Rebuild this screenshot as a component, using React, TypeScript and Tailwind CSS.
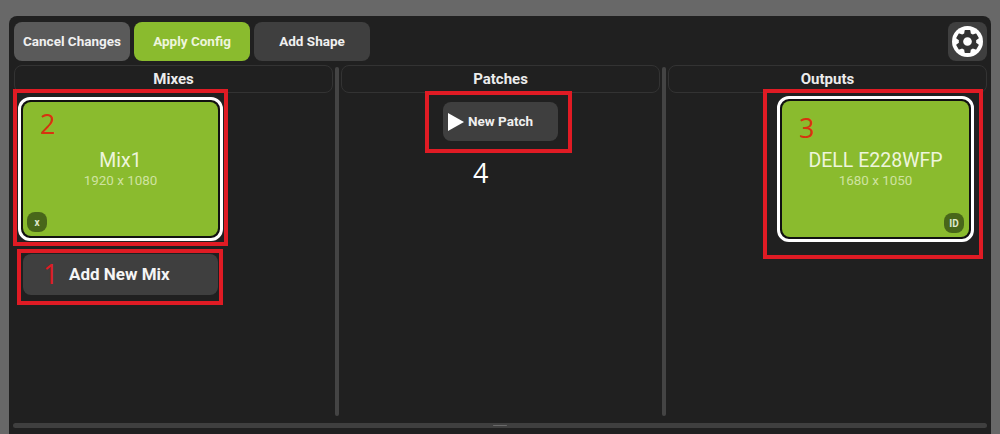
import { MdSettings } from "react-icons/md"

function ToolButton({ label, green }: { label: string; green?: boolean }) {
  return (
    <button
      className={
        green
          ? "h-[39px] w-[116px] rounded-[8px] bg-[#8abb2e] text-[13.5px] font-bold text-[#eef5dc]"
          : label === "Cancel Changes"
            ? "h-[39px] w-[116px] rounded-[8px] bg-[#5a5a5a] text-[13.5px] font-bold text-[#f0f0f0]"
            : "h-[39px] w-[116px] rounded-[8px] bg-[#3f3f3f] text-[13.5px] font-bold text-[#f0f0f0]"
      }
    >
      {label}
    </button>
  )
}

function ColumnHeader({ title }: { title: string }) {
  return (
    <div className="flex h-[28px] items-center justify-center rounded-[8px] border border-[#333333] pt-[1px] text-[15px] font-bold text-[#ececec]">
      {title}
    </div>
  )
}

function Divider() {
  return <div className="mt-[2px] h-[349px] w-[4px] shrink-0 rounded-full bg-[#444444]" />
}

function RedBox({ className }: { className: string }) {
  return <div className={"pointer-events-none absolute border-[4px] border-[#e01b24] " + className} />
}

function Card({
  name,
  size,
  badge,
  badgeRight,
  children,
}: {
  name: string
  size: string
  badge: string
  badgeRight?: boolean
  children: React.ReactNode
}) {
  return (
    <div className="h-full w-full rounded-[12px] border-[3px] border-white bg-[#111111] p-[2px]">
      <div className="relative flex h-full w-full flex-col items-center justify-center rounded-[8px] bg-[#8abb2e]">
        <span className="text-[19.5px] leading-[24px] text-[#eef5dc]">{name}</span>
        <span className="text-[13.4px] leading-[16px] text-[#cfe3a0]">{size}</span>
        {children}
        <span
          className={
            badgeRight
              ? "absolute bottom-[4px] right-[5px] flex h-[20px] w-[20px] items-center justify-center rounded-[8px] bg-[#48661a] text-[10px] font-bold text-[#dfe8cc]"
              : "absolute bottom-[4px] left-[4px] flex h-[20px] w-[20px] items-center justify-center rounded-[8px] bg-[#48661a] text-[10px] font-bold text-[#dfe8cc]"
          }
        >
          {badge}
        </span>
      </div>
    </div>
  )
}

export default function App() {
  return (
    <div className="h-[434px] w-[1000px] overflow-hidden bg-[#686868] px-[9px] pt-[16px] font-['Roboto',sans-serif]">
      <div className="flex h-[418px] flex-col rounded-t-[8px] bg-[#202020] pl-[5px] pr-[4px] pt-[6px]">
        <div className="flex justify-between">
          <div className="flex gap-[4px]">
            <ToolButton label="Cancel Changes" />
            <ToolButton label="Apply Config" green />
            <ToolButton label="Add Shape" />
          </div>
          <button className="flex h-[39px] w-[39px] items-center justify-center rounded-[8px] bg-[#3f3f3f]">
            <span className="flex h-[31px] w-[31px] items-center justify-center rounded-full bg-white">
              <MdSettings className="h-[29px] w-[29px] text-[#333333]" />
            </span>
          </button>
        </div>

        <div className="mt-[4px] flex flex-1 gap-[2px]">
          <div className="flex w-[319px] shrink-0 flex-col">
            <ColumnHeader title="Mixes" />
            <div className="relative ml-[4px] mt-[4px] h-[144px] w-[205px]">
              <Card name="Mix1" size="1920 x 1080" badge="x">
                <span className="absolute left-[17px] top-[2px] font-['Open_Sans'] text-[27px] leading-[40px] text-[#d8330f]">2</span>
              </Card>
              <RedBox className="-left-[5px] -top-[8px] h-[157px] w-[215px]" />
            </div>
            <div className="relative ml-[9px] mt-[13px] w-[195px]">
              <button className="flex h-[41px] w-full items-center rounded-[8px] bg-[#3f3f3f] pl-[46px] text-[17px] font-bold text-[#f5f5f5]">
                Add New Mix
              </button>
              <span className="absolute left-[20px] top-[0px] font-['Open_Sans'] text-[27px] leading-[40px] text-[#e01b24]">1</span>
              <RedBox className="-left-[6px] -top-[5px] h-[56px] w-[206px]" />
            </div>
          </div>

          <Divider />

          <div className="flex w-[319px] shrink-0 flex-col">
            <ColumnHeader title="Patches" />
            <div className="relative ml-[102px] mt-[9px] w-[115px]">
              <button className="flex h-[39px] w-full items-center rounded-[8px] bg-[#3f3f3f] pl-[5px] text-[13.5px] font-bold text-[#f0f0f0]">
                <svg viewBox="0 0 16 18" className="mr-[4px] h-[22px] w-[16px]">
                  <path d="M0 0 L16 9 L0 18 Z" fill="#ffffff" />
                </svg>
                New Patch
              </button>
              <RedBox className="-left-[18px] -top-[11px] h-[62px] w-[147px]" />
              <span className="absolute left-[30px] top-[51px] font-['Open_Sans'] text-[27px] leading-[40px] text-white">4</span>
            </div>
          </div>

          <Divider />

          <div className="flex w-[319px] shrink-0 flex-col">
            <ColumnHeader title="Outputs" />
            <div className="relative ml-[109px] mt-[3px] h-[146px] w-[197px]">
              <Card name="DELL E228WFP" size="1680 x 1050" badge="ID" badgeRight>
                <span className="absolute left-[17px] top-[7px] font-['Open_Sans'] text-[27px] leading-[40px] text-[#d8330f]">3</span>
              </Card>
              <RedBox className="-left-[14px] -top-[7px] h-[170px] w-[220px]" />
            </div>
          </div>
        </div>

        <div className="mb-[6px] ml-[-1px] flex h-[5px] w-[974px] items-center justify-center rounded-full bg-[#3f3f3f]">
          <div className="h-[1px] w-[14px] rounded-full bg-[#6a6a6a]" />
        </div>
      </div>
    </div>
  )
}
